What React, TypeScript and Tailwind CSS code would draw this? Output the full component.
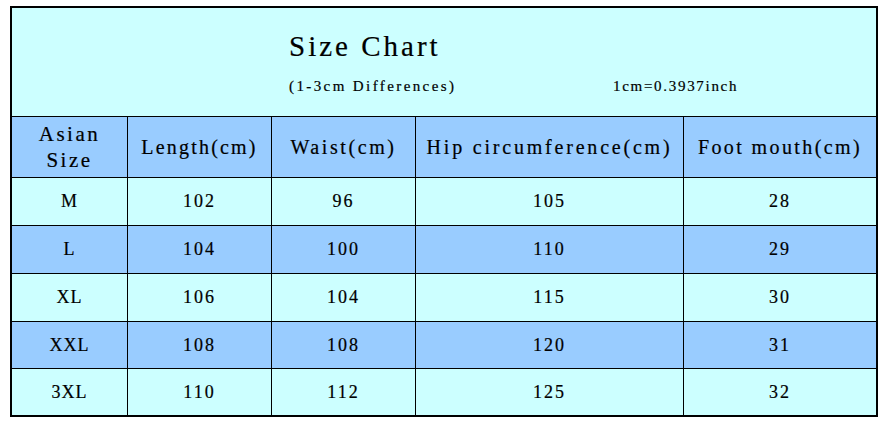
import React from "react";

const rows = [
  { size: "M", v: ["102", "96", "105", "28"], bg: "bg-[#ccffff]" },
  { size: "L", v: ["104", "100", "110", "29"], bg: "bg-[#99ccff]" },
  { size: "XL", v: ["106", "104", "115", "30"], bg: "bg-[#ccffff]" },
  { size: "XXL", v: ["108", "108", "120", "31"], bg: "bg-[#99ccff]" },
  { size: "3XL", v: ["110", "112", "125", "32"], bg: "bg-[#ccffff]" },
];
const heights = ["h-[47px]", "h-[47px]", "h-[47px]", "h-[46px]", "h-[46px]"];

const headers = [
  { t: "Length(cm)", c: "tracking-[2.2px]" },
  { t: "Waist(cm)", c: "tracking-[2.6px]" },
  { t: "Hip circumference(cm)", c: "tracking-[2.8px]" },
  { t: "Foot mouth(cm)", c: "tracking-[2.4px]" },
];

export default function App() {
  return (
    <div
      className="w-[885px] h-[426px] bg-white pt-[6px] pl-[10px] text-black [-webkit-text-stroke:0.2px_#000]"
      style={{ fontFamily: '"Liberation Serif", "Times New Roman", serif' }}
    >
      <div className="w-[868px] h-[411px] border-2 border-black bg-black flex flex-col gap-px">
        <div className="h-[108px] bg-[#ccffff] pl-[277px] pt-[24px] flex flex-col">
          <div className="text-[29px] leading-[29px] tracking-[3px]">Size Chart</div>
          <div className="mt-[18px] flex text-[15px] leading-[15px]">
            <span className="w-[324px] tracking-[2.4px]">(1-3cm Differences)</span>
            <span className="tracking-[1.7px]">1cm=0.3937inch</span>
          </div>
        </div>
        <div className="grid grid-cols-[115px_143px_143px_267px_192px] gap-px">
          <div className="h-[60px] bg-[#99ccff] flex flex-col items-center justify-center text-[21px] leading-[26px] tracking-[2.5px]">
            <span>Asian</span>
            <span>Size</span>
          </div>
          {headers.map((h) => (
            <div
              key={h.t}
              className={`h-[60px] bg-[#99ccff] flex items-center justify-center text-[20px] leading-[26px] whitespace-nowrap ${h.c}`}
            >
              {h.t}
            </div>
          ))}
          {rows.map((r, i) => (
            <React.Fragment key={r.size}>
              <div className={`${heights[i]} ${r.bg} flex items-center justify-center text-[18px] tracking-[1px]`}>
                {r.size}
              </div>
              {r.v.map((v, j) => (
                <div
                  key={j}
                  className={`${heights[i]} ${r.bg} flex items-center justify-center text-[18px] tracking-[2px]`}
                >
                  {v}
                </div>
              ))}
            </React.Fragment>
          ))}
        </div>
      </div>
    </div>
  );
}
